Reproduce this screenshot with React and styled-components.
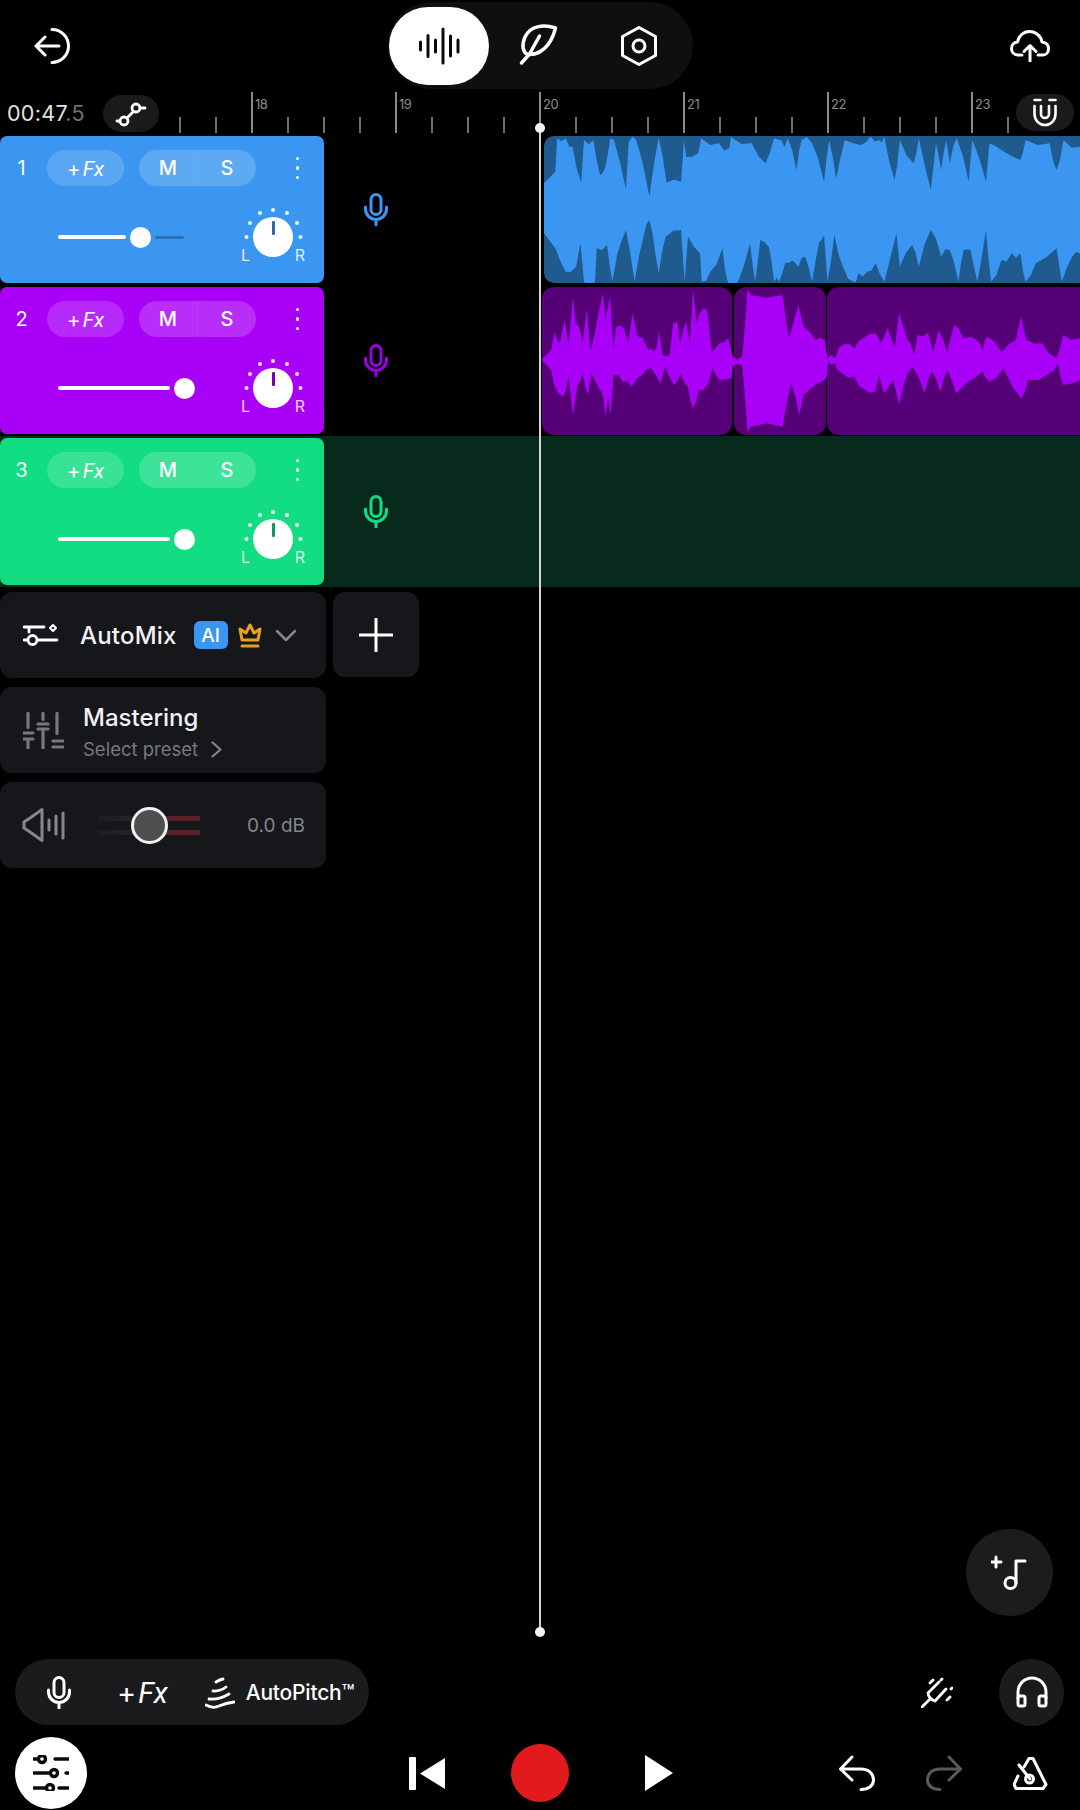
import styled, { createGlobalStyle } from "styled-components";

const GlobalStyle = createGlobalStyle`
  html, body {
    margin: 0;
    background: #000;
    font-family: Inter, "Liberation Sans", sans-serif;
  }
  * { box-sizing: border-box; }
`;

const BLUE = "#3a96f0";
const PURPLE = "#a900f7";
const GREEN = "#12dd82";

const Page = styled.div`
  position: relative;
  width: 1080px;
  height: 1810px;
  overflow: hidden;
  background: #000;
  color: #fff;
  display: flex;
  flex-direction: column;
`;

const TopBar = styled.div`
  height: 92px;
  display: grid;
  grid-template-columns: 1fr auto 1fr;
  align-items: center;
  padding: 0 30px;
`;

const BackSlot = styled.div`
  display: flex;
  margin: 0 0 0 4px;
`;

const Segment = styled.div`
  width: 305px;
  height: 87px;
  margin-top: -1px;
  padding-left: 1px;
  border-radius: 44px;
  background: #0f0f10;
  display: flex;
  align-items: center;
`;

const SegmentItem = styled.div`
  width: 100px;
  height: 78px;
  border-radius: 39px;
  background: ${(p) => (p.$active ? "#fff" : "transparent")};
  display: flex;
  align-items: center;
  justify-content: center;
`;

const CloudSlot = styled.div`
  justify-self: end;
  display: flex;
`;

const Ruler = styled.div`
  position: relative;
  height: 42px;
  display: flex;
`;

const RulerLeft = styled.div`
  width: 179px;
  flex: none;
  display: flex;
  align-items: center;
  padding: 0 0 0 7px;
`;

const Time = styled.div`
  width: 96px;
  font-size: 21.5px;
  letter-spacing: 0.3px;
  color: #e4e4e4;
  white-space: nowrap;
  span { color: #6f6f6f; }
`;

const RoundTool = styled.div`
  width: 56px;
  height: 37px;
  border-radius: 19px;
  background: #1a1a1c;
  display: flex;
  align-items: center;
  justify-content: center;
`;

const MagnetTool = styled(RoundTool)`
  position: absolute;
  right: 6px;
  top: 2px;
  width: 58px;
`;

const Tick = styled.div`
  flex: none;
  width: 36px;
  height: ${(p) => (p.$major ? "41px" : "16px")};
  align-self: flex-end;
  margin-bottom: 1px;
  border-left: 2px solid ${(p) => (p.$major ? "#8a8a8a" : "#707070")};
  font-size: 13px;
  line-height: 14px;
  letter-spacing: -0.5px;
  color: #8c8c8c;
  padding: 5px 0 0 2px;
`;

const Row = styled.div`
  height: 151px;
  flex: none;
  display: flex;
  background: ${(p) => p.$lane || "transparent"};
`;

const Header = styled.div`
  width: 324px;
  flex: none;
  margin: 2px 0;
  border-radius: 7px;
  background: ${(p) => p.$color};
  padding-top: 14px;
`;

const HeaderTop = styled.div`
  display: flex;
  align-items: center;
  height: 36px;
  padding: 0 25px 0 11px;
`;

const TrackNo = styled.div`
  width: 21px;
  margin-right: 15px;
  text-align: center;
  font-size: 20px;
`;

const FxPill = styled.div`
  width: 77px;
  height: 36px;
  border-radius: 18px;
  background: rgba(255, 255, 255, 0.16);
  display: flex;
  align-items: center;
  justify-content: center;
`;

const FxText = styled.span`
  font-size: ${(p) => p.$size || 21}px;
  margin-left: ${(p) => p.$ml || 0}px;
  font-weight: 400;
  white-space: nowrap;
  i {
    font-family: Roboto, sans-serif;
    font-weight: 400;
    margin-left: 2px;
  }
`;

const MutePill = styled.div`
  width: 117px;
  height: 36px;
  margin-left: 15px;
  border-radius: 18px;
  background: rgba(255, 255, 255, 0.18);
  display: flex;
  font-size: 20px;
  font-weight: 500;
  span {
    flex: 1;
    display: flex;
    align-items: center;
    justify-content: center;
  }
  span + span { border-left: 1px solid rgba(255, 255, 255, 0.04); }
`;

const Dots = styled.div`
  margin-left: auto;
  display: flex;
  flex-direction: column;
  gap: 6px;
  i {
    width: 3.5px;
    height: 3.5px;
    border-radius: 50%;
    background: #fff;
  }
`;

const HeaderBottom = styled.div`
  display: flex;
  align-items: center;
  justify-content: space-between;
  margin-top: 21px;
  padding: 0 21px 0 58px;
`;

const Slider = styled.div`
  width: 137px;
  display: flex;
  align-items: center;
  gap: 4px;
`;

const SliderFill = styled.div`
  width: ${(p) => p.$width}px;
  height: 4px;
  border-radius: 2px;
  background: #fff;
`;

const SliderThumb = styled.div`
  width: 21px;
  height: 21px;
  border-radius: 50%;
  background: #fff;
`;

const SliderRest = styled.div`
  width: 29px;
  height: 3px;
  border-radius: 2px;
  background: rgba(20, 60, 100, 0.4);
`;

const Knob = styled.div`
  position: relative;
  width: 60px;
  height: 60px;
  display: flex;
  align-items: center;
  justify-content: center;
  svg { position: absolute; inset: 0; }
`;

const KnobCap = styled.div`
  width: 40px;
  height: 40px;
  border-radius: 50%;
  background: #fff;
  display: flex;
  justify-content: center;
  padding-top: 4px;
  i {
    width: 3px;
    height: 14px;
    border-radius: 1px;
    background: ${(p) => p.$color};
    filter: brightness(0.7);
  }
`;

const KnobLabel = styled.span`
  position: absolute;
  top: 40px;
  ${(p) => (p.$side === "L" ? "left: -2px;" : "right: -2px;")}
  font-size: 16px;
  line-height: 16px;
  color: rgba(255, 255, 255, 0.85);
`;

const Lane = styled.div`
  flex: 1;
  display: flex;
  min-width: 0;
`;

const MicSlot = styled.div`
  width: ${(p) => p.$width}px;
  flex: none;
  padding-left: 40px;
  display: flex;
  align-items: center;
`;

const Clip = styled.div`
  flex: 1;
  margin: 2px 0;
  border-radius: 10px 0 0 10px;
  background: #1f5b8f;
  overflow: hidden;
  svg { display: block; width: 100%; height: 100%; }
`;

const ClipGroup = styled.div`
  position: relative;
  flex: 1;
  margin: 2px 0 1px;
  display: flex;
  gap: 1.5px;
  > svg {
    position: absolute;
    inset: 0;
    width: 100%;
    height: 100%;
  }
`;

const ClipPart = styled.div`
  width: ${(p) => (p.$width ? `${p.$width}px` : "auto")};
  flex: ${(p) => (p.$width ? "none" : "1")};
  border-radius: ${(p) => (p.$open ? "12px 0 0 12px" : "12px")};
  background: #560078;
`;

const Middle = styled.div`
  flex: 1;
  display: flex;
  flex-direction: column;
  justify-content: space-between;
`;

const SideColumn = styled.div`
  display: grid;
  grid-template-columns: 326px 86px;
  column-gap: 7px;
  row-gap: 9px;
  margin-top: 5px;
  width: max-content;
`;

const Card = styled.div`
  grid-column: 1;
  height: 86px;
  border-radius: 12px;
  background: #16171a;
  display: flex;
  align-items: center;
`;

const AutoMixCard = styled(Card)`
  padding-left: 23px;
`;

const CardTitle = styled.div`
  font-size: 24px;
  line-height: 28px;
  font-weight: 500;
  color: #f2f2f2;
  white-space: nowrap;
`;

const AutoMixTitle = styled(CardTitle)`
  margin: 1px 0 0 21px;
  letter-spacing: 0.2px;
`;

const AiBadge = styled.div`
  width: 34px;
  height: 28px;
  margin: 0 10px 0 17px;
  border-radius: 6px;
  background: ${BLUE};
  font-size: 19px;
  font-weight: 500;
  display: flex;
  align-items: center;
  justify-content: center;
`;

const IconSlot = styled.span`
  display: flex;
  flex: none;
  margin-left: ${(p) => p.$ml || 0}px;
`;

const AddButton = styled.div`
  height: 85px;
  border-radius: 12px;
  background: #16171a;
  display: flex;
  align-items: center;
  justify-content: center;
`;

const MasteringCard = styled(Card)`
  padding-left: 23px;
  gap: 19px;
`;

const MasteringText = styled.div`
  display: flex;
  flex-direction: column;
  gap: 6px;
  padding-top: 4px;
`;

const PresetLine = styled.div`
  display: flex;
  align-items: center;
  gap: 13px;
  height: 22px;
  font-size: 18.5px;
  color: #77797d;
  white-space: nowrap;
`;

const VolumeCard = styled(Card)`
  padding: 0 21px 0 22px;
`;

const VolumeSlider = styled.div`
  position: relative;
  width: 102px;
  height: 37px;
  margin-left: 33px;
  display: flex;
  flex-direction: column;
  justify-content: center;
  gap: 9px;
`;

const VolumeLine = styled.div`
  height: 5px;
  background: linear-gradient(90deg, #1b1c1e 0, #262729 50%, #5a2229 50%, #5a2229 100%);
`;

const VolumeThumb = styled.div`
  position: absolute;
  left: 33px;
  top: 0;
  width: 37px;
  height: 37px;
  border-radius: 50%;
  border: 3px solid #f2f2f2;
  background: #4e4f51;
`;

const Db = styled.div`
  margin-left: auto;
  font-size: 19px;
  color: #85878a;
  white-space: nowrap;
`;

const Fab = styled.div`
  align-self: flex-end;
  width: 87px;
  height: 87px;
  margin: 0 27px 42px 0;
  padding: 0 2px 2px 0;
  border-radius: 50%;
  background: #1c1c1e;
  display: flex;
  align-items: center;
  justify-content: center;
`;

const ToolRow = styled.div`
  height: 68px;
  flex: none;
  display: flex;
  align-items: center;
  justify-content: space-between;
  padding: 0 16px 0 15px;
`;

const ToolPill = styled.div`
  width: 354px;
  height: 66px;
  border-radius: 33px;
  background: #1b1b1d;
  display: flex;
  align-items: center;
  padding-left: 32px;
`;

const PitchText = styled.span`
  margin-left: 11px;
  font-size: 21px;
  font-weight: 500;
  letter-spacing: -0.2px;
  white-space: nowrap;
`;

const MonitorGroup = styled.div`
  display: flex;
  align-items: center;
  gap: 46px;
`;

const MonitorButton = styled.div`
  width: 65px;
  height: 67px;
  border-radius: 50%;
  background: #1b1b1d;
  display: flex;
  align-items: center;
  justify-content: center;
`;

const BottomRow = styled.div`
  height: 72px;
  flex: none;
  margin: 11px 0 1px;
  display: grid;
  grid-template-columns: 1fr auto 1fr;
  align-items: center;
  padding: 0 15px;
`;

const MixerButton = styled.div`
  width: 72px;
  height: 72px;
  border-radius: 50%;
  background: #fff;
  display: flex;
  align-items: center;
  justify-content: center;
`;

const Transport = styled.div`
  display: flex;
  align-items: center;
  margin-left: 2px;
`;

const RecordButton = styled.div`
  width: 58px;
  height: 58px;
  margin: 0 76px 0 66px;
  border-radius: 50%;
  background: #e11b1d;
`;

const HistoryGroup = styled.div`
  justify-self: end;
  display: flex;
  align-items: center;
  gap: 51px;
  margin-right: 16px;
`;

const Playhead = styled.div`
  position: absolute;
  left: 539px;
  top: 128px;
  width: 2px;
  height: 1504px;
  background: #d4d4d4;
  &::before, &::after {
    content: "";
    position: absolute;
    left: -4px;
    width: 10px;
    height: 10px;
    border-radius: 50%;
    background: #f2f2f2;
  }
  &::before { top: -5px; }
  &::after { bottom: -5px; }
`;

const Line = ({ size = 36, h, vb, children, color = "#fff", sw = 3 }) => (
  <svg
    width={size}
    height={h || size}
    viewBox={vb || `0 0 ${size} ${h || size}`}
    fill="none"
    stroke={color}
    strokeWidth={sw}
    strokeLinecap="round"
    strokeLinejoin="round"
  >
    {children}
  </svg>
);

const MicIcon = ({ color = "#fff" }) => (
  <Line size={24} h={33} color={color}>
    <rect x="7" y="1.5" width="10" height="20" rx="5" />
    <path d="M1.5 14v2a10.5 10.5 0 0 0 21 0v-2M12 27v5" />
  </Line>
);

const BackIcon = () => (
  <Line>
    <path d="M18 1.5a16.5 16.5 0 0 1 0 33M2 18h23M11 9l-9 9 9 9" />
  </Line>
);

const WaveIcon = () => (
  <Line size={44} h={38} color="#0a0a0a" sw={3}>
    <path d="M3.5 15v8M11 8.5v21M18.5 13v12M26 2v34M33.5 9v20M41 13v12" />
  </Line>
);

const FeatherIcon = () => (
  <Line size={45} vb="18 13 45 45" sw={3.5}>
    <path d="M57.5 18C45 14 32 16 27 27C23.5 35 24.5 42 29.5 44.5C41 45 52.5 38 57.5 18Z" />
    <path d="M23.5 53L31.5 44L41.5 26M31.5 44c3.500.5 7 0 10-2" />
  </Line>
);

const HexIcon = () => (
  <Line size={36} h={40}>
    <path d="M18 1.5L34.5 10.5V29.5L18 38.5L1.5 29.5V10.5Z" />
    <circle cx="18" cy="20" r="6" />
  </Line>
);

const CloudIcon = () => (
  <Line size={40} h={32}>
    <path d="M12 25H8C3.500 25 1.500 21.500 1.500 18.500C1.500 15 4 12.500 7.500 12C8.500 6 13.500 1.500 19.500 1.500C25.500 1.500 31 6 32 12C36 12.500 38.500 15 38.500 19C38.500 22.500 36 25 33 25H28" />
    <path d="M20 31V16M14 21.5L20 15.5L26 21.5" />
  </Line>
);

const LinkIcon = () => (
  <Line size={56} h={37} vb="3 4 56 37" sw={2.8}>
    <circle cx="36" cy="17" r="4" />
    <circle cx="24" cy="30" r="4" />
    <path d="M33.5 20.5L27 27M40 17h5M20 30h-3" />
  </Line>
);

const MagnetIcon = () => (
  <Line size={24} h={29} sw={2.6}>
    <path d="M1.500 2h6M16.500 2h6M1.500 8v8a10.500 11 0 0 0 21 0V8M8 8v8a4 4 0 0 0 8 0V8" />
  </Line>
);

const AutoMixIcon = () => (
  <Line size={36} h={26} sw={2.8}>
    <path d="M1 5h20M6 5v5M1 18h3M15 18h19" />
    <circle cx="9.5" cy="18" r="4.5" />
    <path d="M30 3l3 3-3 3-3-3z" strokeWidth="2" />
  </Line>
);

const CrownIcon = () => (
  <Line size={24} h={25} color="#e8a11a" sw={3}>
    <path d="M4 17L2 6l6 4 4-8 4 8 6-4-2 11zM4 23h16" />
  </Line>
);

const ChevronDown = () => (
  <Line size={22} h={13} color="#85878a" sw={2.5}>
    <path d="M2 2l9 9 9-9" />
  </Line>
);

const ChevronRight = () => (
  <Line size={11} h={17} color="#85878a" sw={2.2}>
    <path d="M1.500 1.500L9.500 8.500L1.500 15.500" />
  </Line>
);

const PlusIcon = () => (
  <Line size={34}>
    <path d="M17 1v32M1 17h32" />
  </Line>
);

const MasteringIcon = () => (
  <Line size={41} h={37} color="#76787b" sw={3.2}>
    <path d="M5 1.500v14M1 21h9M1 27h9M5 27v9M20 1.500v6M15 12h10M15 17h10M20 17v19M34 1.500v20M30 29h10M30 35h10" />
  </Line>
);

const SpeakerIcon = () => (
  <Line size={43} h={34} color="#85878a" sw={3}>
    <path d="M20 1.500L8 10L2 14V20L8 24L20 32.500Z" />
    <path d="M27 12v10M34 8v18M41 5v25" />
  </Line>
);

const AddNoteIcon = () => (
  <Line>
    <path d="M5 3v10M0 8h10M34 7H25v22" />
    <circle cx="19.5" cy="29" r="5.5" />
  </Line>
);

const PitchIcon = () => (
  <Line size={30} h={34} vb="6 8 30 34" sw={2.8}>
    <path d="M17 15q4-2.500 7-3M14 24q7 .500 13-4M10 32q10 1 20-5M7 38q7 4 13 1q7-3 15-4" />
  </Line>
);

const ForkIcon = () => (
  <Line size={32} h={31} sw={2.8}>
    <path d="M1 30l8-8M7 16l11-11M14 24l11-12M7 16c0 3 3 7 7 8M9 6l3-3M21 2l-1 1M26 23l3-3M30 12l1-1" />
  </Line>
);

const HeadphonesIcon = () => (
  <Line size={32}>
    <path d="M2 22V16a14 14 0 0 1 28 0v6" />
    <rect x="2" y="20" width="7" height="10" rx="2" />
    <rect x="23" y="20" width="7" height="10" rx="2" />
  </Line>
);

const MixerIcon = () => (
  <Line color="#0a0a0a" sw={3.4}>
    <path d="M1 4h4M22 4h14M1 18h16M33 18h3M1 33h11M26 33h10" />
    <circle cx="9" cy="4" r="3.5" />
    <circle cx="21" cy="18" r="3.5" />
    <circle cx="17" cy="33" r="3.5" />
  </Line>
);

const SkipIcon = () => (
  <svg width="36" height="33" viewBox="0 0 36 33" fill="#fff">
    <rect x="0" y="0" width="7" height="33" rx="1" />
    <path d="M36 1v31L11 16.500z" />
  </svg>
);

const PlayIcon = () => (
  <svg width="28" height="36" viewBox="0 0 28 36" fill="#fff">
    <path d="M0 0l28 18L0 36z" />
  </svg>
);

const UndoIcon = ({ color = "#fff", flip }) => (
  <Line color={color}>
    <g transform={flip ? "matrix(-1 0 0 1 36 0)" : undefined}>
      <path d="M13 2L1.500 14L13 25M1.500 14H22C30 14 34.500 19 34.500 25C34.500 31 29 34.500 22 34.500" />
    </g>
  </Line>
);

const MetronomeIcon = () => (
  <Line vb="8 6 36 36">
    <path d="M14 16L25 30M19 18L24 9.500H28L41 35.500L38 39.500H11L9 35.500L13 27" />
    <circle cx="24.5" cy="30" r="4" />
  </Line>
);

const knobDots = [
  [3.5, 30],
  [7, 16],
  [17, 6],
  [30, 3],
  [44, 6],
  [54, 16],
  [57.5, 30],
];

const PanKnob = ({ color }) => (
  <Knob>
    <svg width="60" height="60" viewBox="0 0 60 60" fill="#fff">
      {knobDots.map(([x, y]) => (
        <circle key={x} cx={x} cy={y} r="2" opacity="0.9" />
      ))}
    </svg>
    <KnobCap $color={color}>
      <i />
    </KnobCap>
    <KnobLabel $side="L">L</KnobLabel>
    <KnobLabel $side="R">R</KnobLabel>
  </Knob>
);

const TrackHeader = ({ no, color, fill, rest }) => (
  <Header $color={color}>
    <HeaderTop>
      <TrackNo>{no}</TrackNo>
      <FxPill>
        <FxText>
          +<i>Fx</i>
        </FxText>
      </FxPill>
      <MutePill>
        <span>M</span>
        <span>S</span>
      </MutePill>
      <Dots>
        <i />
        <i />
        <i />
      </Dots>
    </HeaderTop>
    <HeaderBottom>
      <Slider>
        <SliderFill $width={fill} />
        <SliderThumb />
        {rest && <SliderRest />}
      </Slider>
      <PanKnob color={color} />
    </HeaderBottom>
  </Header>
);

const blueTop = [[12,550],[45,515],[50,415],[75,415],[95,440],[120,548],[128,420],[155,420],[175,525],[190,500],[205,415],[215,420],[250,568],[258,425],[280,420],[318,590],[345,415],[368,548],[410,545],[418,420],[425,470],[460,460],[468,415],[520,430],[550,445],[555,410],[615,430],[655,490],[680,415],[700,420],[710,440],[720,415],[745,510],[760,420],[790,430],[825,545],[840,420],[860,535],[885,420],[930,435],[960,410],[985,420],[1000,410],[1030,540],[1045,420],[1085,490],[1100,415],[1135,570],[1150,430],[1165,510],[1180,420],[1190,490],[1210,415],[1245,545],[1255,420],[1295,545],[1305,430],[1340,450],[1395,480],[1410,420],[1480,430],[1500,510],[1520,420],[1568,440]];
const blueBottom = [[12,700],[45,745],[75,815],[105,800],[118,730],[128,845],[160,845],[165,745],[195,735],[210,845],[225,760],[250,690],[275,845],[300,715],[318,660],[335,760],[345,820],[365,710],[410,690],[420,845],[430,710],[465,760],[470,845],[495,815],[530,745],[545,845],[575,845],[610,730],[625,845],[640,720],[665,740],[680,845],[695,845],[705,815],[720,790],[750,800],[770,770],[790,845],[810,730],[825,705],[835,845],[855,705],[880,800],[910,845],[925,820],[950,815],[975,790],[1000,845],[1035,700],[1045,800],[1080,735],[1100,800],[1135,690],[1165,770],[1190,750],[1215,845],[1230,750],[1250,750],[1270,845],[1295,690],[1310,845],[1340,780],[1370,760],[1395,760],[1410,845],[1440,790],[1500,745],[1515,845],[1545,770],[1568,760]];

const purpleTop = [[34,238],[60,210],[70,155],[85,190],[98,120],[110,195],[122,50],[130,130],[140,140],[150,190],[162,85],[172,210],[185,160],[208,40],[215,120],[228,50],[238,210],[245,140],[268,145],[280,190],[292,100],[305,165],[320,170],[330,195],[345,205],[360,205],[368,155],[378,225],[398,225],[408,130],[420,125],[428,190],[445,125],[455,190],[465,30],[475,130],[490,90],[505,90],[518,215],[540,190],[565,175],[578,230],[605,230],[620,28],[630,45],[720,45],[738,175],[765,75],[780,140],[815,180],[840,180],[848,235],[870,235],[890,195],[925,205],[950,175],[985,160],[1000,190],[1020,145],[1040,200],[1052,100],[1065,145],[1085,190],[1095,225],[1105,165],[1135,160],[1150,215],[1165,150],[1190,215],[1210,135],[1235,175],[1280,185],[1290,210],[1305,170],[1345,215],[1385,180],[1400,110],[1415,180],[1460,190],[1500,235],[1520,165],[1568,175]];
const purpleBottom = [[34,240],[60,270],[70,320],[95,350],[110,290],[122,405],[135,315],[150,280],[165,345],[175,280],[208,345],[215,410],[222,350],[230,405],[238,285],[265,305],[290,320],[320,285],[345,265],[372,310],[385,260],[410,315],[430,280],[450,320],[465,385],[480,330],[505,315],[520,265],[540,300],[575,295],[578,258],[605,255],[620,455],[630,440],[720,440],[745,310],[768,405],[780,345],[820,310],[845,295],[850,245],[870,250],[885,275],[925,290],[950,325],[985,335],[995,285],[1010,340],[1035,300],[1052,375],[1065,315],[1090,260],[1125,340],[1145,275],[1170,335],[1190,270],[1215,340],[1250,305],[1290,275],[1310,305],[1350,265],[1400,355],[1420,300],[1480,280],[1505,250],[1520,315],[1568,300]];

// adds small jitter between the traced points so the edges aren't too clean
const roughen = (pts, amount) =>
  pts.flatMap(([x, y], i) => {
    const next = pts[i + 1];
    if (!next || next[0] - x < 14) return [[x, y]];
    const midX = (x + next[0]) / 2;
    const midY = (y + next[1]) / 2 + Math.sin(i * 12.9) * amount;
    return [[x, y], [midX, midY]];
  });

const Waveform = ({ top, bottom, color, box, amount }) => (
  <svg viewBox={box} preserveAspectRatio="none">
    <polygon
      fill={color}
      points={[...roughen(top, amount), ...roughen(bottom, amount).reverse()]
        .map((p) => p.join(","))
        .join(" ")}
    />
  </svg>
);

const ticks = Array.from({ length: 24 }, (_, i) => i);

export default function App() {
  return (
    <>
      <GlobalStyle />
      <Page>
        <TopBar>
          <BackSlot>
            <BackIcon />
          </BackSlot>
          <Segment>
            <SegmentItem $active>
              <WaveIcon />
            </SegmentItem>
            <SegmentItem>
              <FeatherIcon />
            </SegmentItem>
            <SegmentItem>
              <HexIcon />
            </SegmentItem>
          </Segment>
          <CloudSlot>
            <CloudIcon />
          </CloudSlot>
        </TopBar>

        <Ruler>
          <RulerLeft>
            <Time>
              00:47<span>.5</span>
            </Time>
            <RoundTool>
              <LinkIcon />
            </RoundTool>
          </RulerLeft>
          {ticks.map((i) => {
            const major = i % 4 === 2;
            return (
              <Tick key={i} $major={major}>
                {major ? 18 + (i - 2) / 4 : ""}
              </Tick>
            );
          })}
          <MagnetTool>
            <MagnetIcon />
          </MagnetTool>
        </Ruler>

        <Row>
          <TrackHeader no="1" color={BLUE} fill={68} rest />
          <Lane>
            <MicSlot $width={220}>
              <MicIcon color={BLUE} />
            </MicSlot>
            <Clip>
              <Waveform top={blueTop} bottom={blueBottom} color={BLUE} box="12 408 1556 441" amount={14} />
            </Clip>
          </Lane>
        </Row>
        <Row>
          <TrackHeader no="2" color={PURPLE} fill={112} />
          <Lane>
            <MicSlot $width={218}>
              <MicIcon color="#9a00e0" />
            </MicSlot>
            <ClipGroup>
              <ClipPart $width={190} />
              <ClipPart $width={92} />
              <ClipPart $open />
              <Waveform top={purpleTop} bottom={purpleBottom} color={PURPLE} box="34 21 1534 444" amount={10} />
            </ClipGroup>
          </Lane>
        </Row>
        <Row $lane="#082a1c">
          <TrackHeader no="3" color={GREEN} fill={112} />
          <Lane>
            <MicSlot $width={220}>
              <MicIcon color={GREEN} />
            </MicSlot>
          </Lane>
        </Row>

        <Middle>
          <SideColumn>
            <AutoMixCard>
              <AutoMixIcon />
              <AutoMixTitle>AutoMix</AutoMixTitle>
              <AiBadge>AI</AiBadge>
              <CrownIcon />
              <IconSlot $ml={13}>
                <ChevronDown />
              </IconSlot>
            </AutoMixCard>
            <AddButton>
              <PlusIcon />
            </AddButton>
            <MasteringCard>
              <MasteringIcon />
              <MasteringText>
                <CardTitle>Mastering</CardTitle>
                <PresetLine>
                  Select preset
                  <ChevronRight />
                </PresetLine>
              </MasteringText>
            </MasteringCard>
            <VolumeCard>
              <SpeakerIcon />
              <VolumeSlider>
                <VolumeLine />
                <VolumeLine />
                <VolumeThumb />
              </VolumeSlider>
              <Db>0.0 dB</Db>
            </VolumeCard>
          </SideColumn>
          <Fab>
            <AddNoteIcon />
          </Fab>
        </Middle>

        <ToolRow>
          <ToolPill>
            <MicIcon />
            <FxText $size={29} $ml={46}>
              +<i>Fx</i>
            </FxText>
            <IconSlot $ml={37}>
              <PitchIcon />
            </IconSlot>
            <PitchText>AutoPitch™</PitchText>
          </ToolPill>
          <MonitorGroup>
            <ForkIcon />
            <MonitorButton>
              <HeadphonesIcon />
            </MonitorButton>
          </MonitorGroup>
        </ToolRow>

        <BottomRow>
          <MixerButton>
            <MixerIcon />
          </MixerButton>
          <Transport>
            <SkipIcon />
            <RecordButton />
            <PlayIcon />
          </Transport>
          <HistoryGroup>
            <UndoIcon />
            <UndoIcon color="#5a5a5a" flip />
            <MetronomeIcon />
          </HistoryGroup>
        </BottomRow>

        <Playhead />
      </Page>
    </>
  );
}
